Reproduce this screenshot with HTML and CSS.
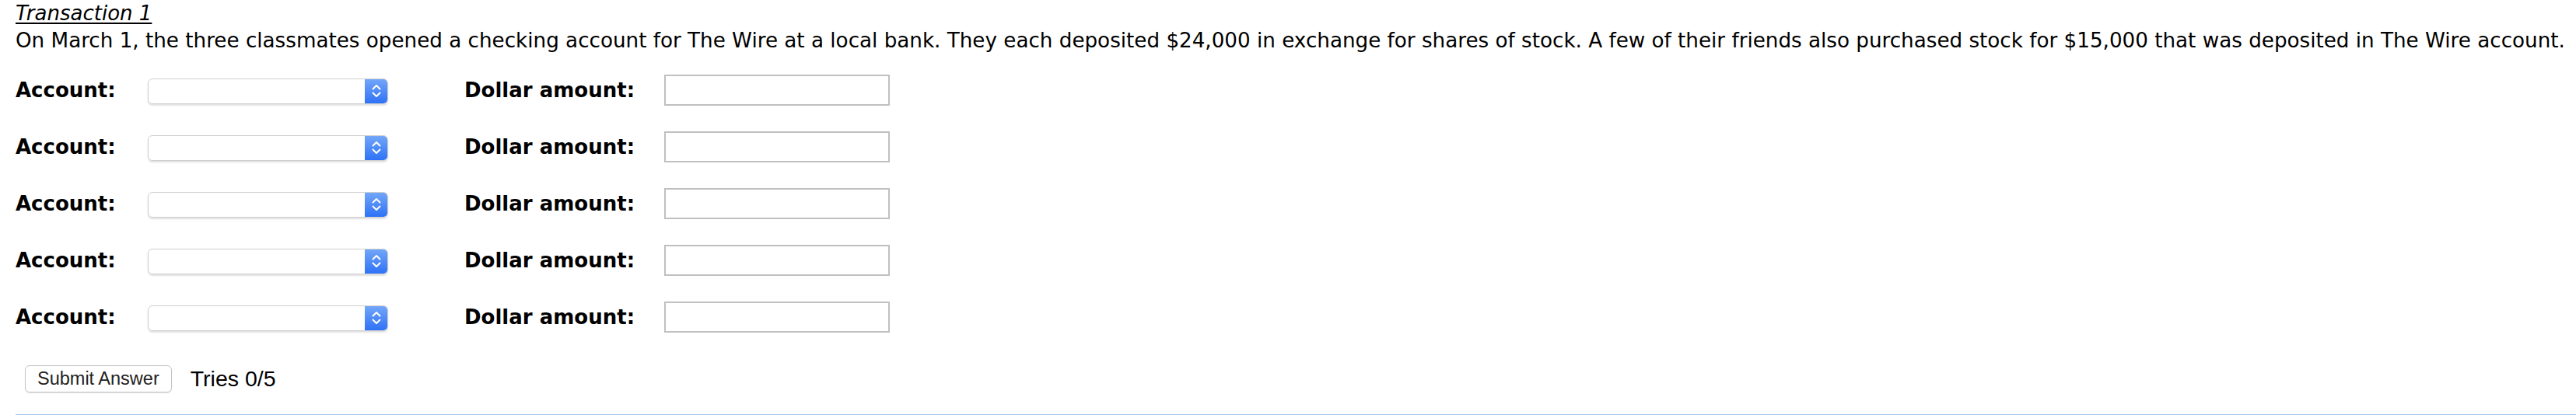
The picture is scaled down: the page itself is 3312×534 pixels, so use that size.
FILE: index.html
```html
<!DOCTYPE html>
<html>
<head>
<meta charset="utf-8">
<link rel="stylesheet" href="styles.css">
</head>
<body>
<div class="page">
  <div class="title">Transaction 1</div>
  <p class="desc">On March 1, the three classmates opened a checking account for The Wire at a local bank. They each deposited $24,000 in exchange for shares of stock. A few of their friends also purchased stock for $15,000 that was deposited in The Wire account.</p>
  <div class="rows">
    <div class="row">
      <span class="label acc">Account:</span>
      <div class="select"><div class="stepper"><svg width="14" height="20" viewBox="0 0 14 20"><path d="M2.5 7.5 L7 3 L11.5 7.5 M2.5 12.5 L7 17 L11.5 12.5" fill="none" stroke="#fff" stroke-width="2" stroke-linecap="round" stroke-linejoin="round"/></svg></div></div>
      <span class="label amt">Dollar amount:</span>
      <div class="input"></div>
    </div>
    <div class="row">
      <span class="label acc">Account:</span>
      <div class="select"><div class="stepper"><svg width="14" height="20" viewBox="0 0 14 20"><path d="M2.5 7.5 L7 3 L11.5 7.5 M2.5 12.5 L7 17 L11.5 12.5" fill="none" stroke="#fff" stroke-width="2" stroke-linecap="round" stroke-linejoin="round"/></svg></div></div>
      <span class="label amt">Dollar amount:</span>
      <div class="input"></div>
    </div>
    <div class="row">
      <span class="label acc">Account:</span>
      <div class="select"><div class="stepper"><svg width="14" height="20" viewBox="0 0 14 20"><path d="M2.5 7.5 L7 3 L11.5 7.5 M2.5 12.5 L7 17 L11.5 12.5" fill="none" stroke="#fff" stroke-width="2" stroke-linecap="round" stroke-linejoin="round"/></svg></div></div>
      <span class="label amt">Dollar amount:</span>
      <div class="input"></div>
    </div>
    <div class="row">
      <span class="label acc">Account:</span>
      <div class="select"><div class="stepper"><svg width="14" height="20" viewBox="0 0 14 20"><path d="M2.5 7.5 L7 3 L11.5 7.5 M2.5 12.5 L7 17 L11.5 12.5" fill="none" stroke="#fff" stroke-width="2" stroke-linecap="round" stroke-linejoin="round"/></svg></div></div>
      <span class="label amt">Dollar amount:</span>
      <div class="input"></div>
    </div>
    <div class="row">
      <span class="label acc">Account:</span>
      <div class="select"><div class="stepper"><svg width="14" height="20" viewBox="0 0 14 20"><path d="M2.5 7.5 L7 3 L11.5 7.5 M2.5 12.5 L7 17 L11.5 12.5" fill="none" stroke="#fff" stroke-width="2" stroke-linecap="round" stroke-linejoin="round"/></svg></div></div>
      <span class="label amt">Dollar amount:</span>
      <div class="input"></div>
    </div>
  </div>
  <div class="submit-row">
    <div class="button">Submit Answer</div>
    <span class="tries">Tries 0/5</span>
  </div>
  <div class="rule"></div>
</div>
</body>
</html>
```

FILE: styles.css
```css
html, body {
  margin: 0;
  padding: 0;
  background: #ffffff;
}
.page {
  padding: 0 0 0 20px;
  font-family: "DejaVu Sans", Verdana, sans-serif;
  color: #000;
}
.title {
  font-size: 26px;
  line-height: 32px;
  font-style: italic;
  text-decoration: underline;
  text-underline-offset: 3px;
  padding-top: 1px;
}
.desc {
  margin: 3px 0 0;
  font-size: 26.2px;
  line-height: 32px;
  white-space: nowrap;
}
.rows {
  display: flex;
  flex-direction: column;
  gap: 33px;
  padding-top: 28px;
}
.row {
  display: flex;
  align-items: center;
  height: 40px;
}
.label {
  font-weight: bold;
  font-size: 26px;
}
.acc {
  width: 170px;
}
.select {
  width: 307px;
  height: 31px;
  border: 1px solid #cfcfcf;
  border-radius: 6px;
  box-shadow: 0 2px 2px rgba(0,0,0,0.12);
  display: flex;
  justify-content: flex-end;
  overflow: hidden;
  margin-top: 2px;
}
.stepper {
  width: 29px;
  height: 100%;
  background: linear-gradient(#72a6f8, #2e72f6);
  display: flex;
  align-items: center;
  justify-content: center;
}
.amt {
  margin-left: 98px;
  width: 257px;
}
.input {
  width: 286px;
  height: 36px;
  border: 2px solid #c0c0c0;
}
.submit-row {
  display: flex;
  align-items: center;
  padding-top: 42px;
  padding-left: 12px;
  gap: 24px;
}
.button {
  font-family: "Liberation Sans", Arial, sans-serif;
  font-size: 23.5px;
  color: #222;
  border: 1px solid #c4c4c4;
  border-radius: 6px;
  box-shadow: 0 1px 1px rgba(0,0,0,0.12);
  padding: 3px 15px 4px;
  line-height: 26px;
}
.tries {
  font-family: "Liberation Sans", Arial, sans-serif;
  font-size: 28.5px;
}
.rule {
  margin-top: 28px;
  height: 2px;
  background: #a3c5ee;
}
```
